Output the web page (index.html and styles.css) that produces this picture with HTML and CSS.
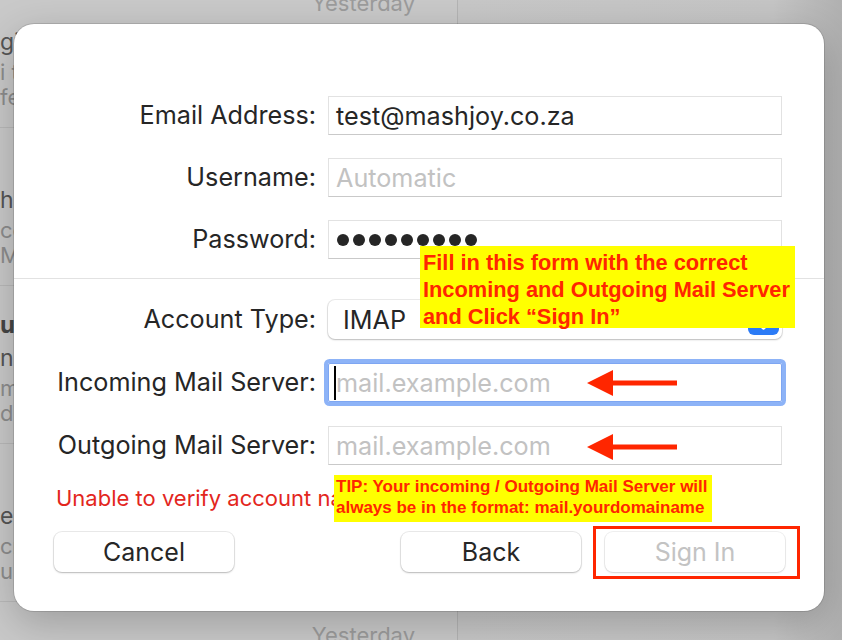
FILE: index.html
```html
<!DOCTYPE html>
<html lang="en">
<head>
    <meta charset="UTF-8">
    <meta name="viewport" content="width=device-width, initial-scale=1.0">
    <title>Add Mail Account</title>
    <link rel="stylesheet" href="styles.css">
</head>
<body>
    <div class="window">
        <aside class="list">
            <div class="list-inner">
                <div class="msg">
                    <div class="msg-head"><span class="sender"></span><span class="date">Yesterday</span></div>
                    <div class="subject">gin notification</div>
                    <div class="preview">i there, a new sign-in was</div>
                    <div class="preview">fetched from your account</div>
                </div>
                <div class="msg">
                    <div class="msg-head"><span class="sender"></span><span class="date">Yesterday</span></div>
                    <div class="subject">he account update</div>
                    <div class="preview">cc: billing team</div>
                    <div class="preview">Mail settings have changed</div>
                </div>
                <div class="msg">
                    <div class="msg-head"><span class="sender">ur hosting</span><span class="date">Yesterday</span></div>
                    <div class="subject">n] Invoice ready</div>
                    <div class="preview">mail server details below</div>
                    <div class="preview">due on receipt</div>
                </div>
                <div class="msg">
                    <div class="msg-head"><span class="sender"></span><span class="date">Yesterday</span></div>
                    <div class="subject">erc order confirmation</div>
                    <div class="preview">cr: thank you for your order</div>
                    <div class="preview">update on your request</div>
                </div>
                <div class="msg">
                    <div class="msg-head"><span class="sender"></span><span class="date">Yesterday</span></div>
                </div>
            </div>
        </aside>
        <main class="reader"></main>
    </div>

    <div class="sheet">
        <div class="fields">
            <label>Email Address:</label>
            <div class="field">test@mashjoy.co.za</div>
            <label>Username:</label>
            <div class="field"><span class="placeholder">Automatic</span></div>
            <label>Password:</label>
            <div class="field dots">
                <span></span><span></span><span></span><span></span><span></span><span></span><span></span><span></span><span></span>
            </div>
        </div>

        <div class="divider"></div>

        <div class="fields">
            <label>Account Type:</label>
            <div class="select">
                <span>IMAP</span>
                <span class="stepper">
                    <svg width="31" height="31" viewBox="0 0 31 31">
                        <path d="M10.5 11 L15.5 6.5 L20.5 11" fill="none" stroke="#fff" stroke-width="2.4" stroke-linecap="round" stroke-linejoin="round"/>
                        <path d="M10.5 20 L15.5 24.5 L20.5 20" fill="none" stroke="#fff" stroke-width="2.4" stroke-linecap="round" stroke-linejoin="round"/>
                    </svg>
                </span>
            </div>
            <label>Incoming Mail Server:</label>
            <div class="field focus"><span class="caret"></span><span class="placeholder">mail.example.com</span></div>
            <label>Outgoing Mail Server:</label>
            <div class="field"><span class="placeholder">mail.example.com</span></div>
        </div>

        <p class="error">Unable to verify account name or password.</p>

        <div class="actions">
            <button type="button">Cancel</button>
            <button type="button" class="push">Back</button>
            <button type="button" class="disabled">Sign In</button>
        </div>
    </div>

    <!-- annotations drawn over the screenshot -->
    <div class="note note-main">Fill in this form with the correct<br>Incoming and Outgoing Mail Server<br>and Click &ldquo;Sign In&rdquo;</div>
    <div class="note note-tip">TIP: Your incoming / Outgoing Mail Server will<br>always be in the format: mail.yourdomainame</div>

    <svg class="arrow arrow-in" width="90" height="26" viewBox="0 0 90 26">
        <path d="M0 13 L26 0 L26 10.5 L90 10.5 L90 15.5 L26 15.5 L26 26 Z" fill="#ff2600"/>
    </svg>
    <svg class="arrow arrow-out" width="90" height="26" viewBox="0 0 90 26">
        <path d="M0 13 L26 0 L26 10.5 L90 10.5 L90 15.5 L26 15.5 L26 26 Z" fill="#ff2600"/>
    </svg>

    <div class="highlight"></div>
</body>
</html>
```

FILE: styles.css
```css
body {
    margin: 0;
    width: 842px;
    height: 640px;
    overflow: hidden;
    position: relative;
    font-family: 'Inter', 'Noto Sans', sans-serif;
    background-color: #c8c8c8;
}

/* Mail window behind the sheet */
.window {
    display: flex;
    height: 640px;
}

.list {
    width: 457px;
    border-right: 1px solid #b4b4b4;
    background-color: #c9c9c9;
    overflow: hidden;
}

.list-inner {
    margin-top: -30px; /* list is scrolled */
}

.msg {
    padding: 24px 42px 17px 0;
    border-bottom: 1px solid #b9b9b9;
    white-space: nowrap;
}

.msg-head {
    display: flex;
    justify-content: space-between;
    align-items: flex-start;
    height: 30px;
}

.sender {
    font-size: 24px;
    line-height: 30px;
    font-weight: 700;
    color: #464646;
}

.date {
    font-size: 22px;
    line-height: 18px;
    color: #9c9c9c;
}

.subject {
    font-size: 23px;
    line-height: 36px;
    color: #555;
}

.preview {
    font-size: 22px;
    line-height: 25px;
    color: #8d8d8d;
}

.reader {
    flex: 1;
    background: linear-gradient(to right, #c7c7c7 0%, #c5c5c5 82%, #b0b0b0 100%);
}

/* Account sheet */
.sheet {
    position: absolute;
    left: 14px;
    top: 24px;
    width: 810px;
    height: 587px;
    box-sizing: border-box;
    padding-top: 72px;
    background-color: #fff;
    border-radius: 20px;
    box-shadow: 0 0 0 1px rgba(0, 0, 0, 0.12), 0 12px 40px rgba(0, 0, 0, 0.22);
    color: #262626;
}

.fields {
    display: grid;
    grid-template-columns: 302px 454px;
    column-gap: 12px;
    row-gap: 23px;
    align-items: center;
}

.divider + .fields {
    row-gap: 24px;
}

label {
    text-align: right;
    font-size: 25.2px;
    line-height: 39px;
}

.field {
    height: 39px;
    box-sizing: border-box;
    border: 1px solid #e2e2e2;
    border-bottom-color: #c9c9c9;
    padding-left: 7px;
    display: flex;
    align-items: center;
    font-size: 25.2px;
}

.placeholder {
    color: #c2c2c2;
}

.field.focus {
    padding-left: 5px;
    border-color: #7ea6f2;
    border-radius: 2px;
    box-shadow: 0 0 0 4px #8db3f7;
}

.caret {
    display: inline-block;
    width: 2px;
    height: 34px;
    background-color: #000;
}

.dots {
    gap: 4px;
    padding-left: 8px;
}

.dots span {
    width: 12px;
    height: 12px;
    border-radius: 50%;
    background-color: #262626;
}

.divider {
    height: 1px;
    background-color: #e2e2e2;
    margin: 19px 0 21px;
}

.select {
    height: 39px;
    box-sizing: border-box;
    display: flex;
    align-items: center;
    justify-content: space-between;
    padding-left: 15px;
    padding-right: 3px;
    font-size: 25.2px;
    border-radius: 7px;
    background-color: #fff;
    box-shadow: 0 0 0 1px rgba(0, 0, 0, 0.08), 0 1px 2px rgba(0, 0, 0, 0.2);
}

.stepper {
    width: 31px;
    height: 31px;
    border-radius: 6px;
    background-color: #2b7bf6;
}

.stepper svg {
    display: block;
}

.error {
    margin: 18px 0 0 42px;
    font-size: 22px;
    line-height: 30px;
    color: #e3261d;
    white-space: nowrap;
}

.actions {
    display: flex;
    gap: 24px;
    margin-top: 19px;
    padding: 0 39px 0 40px;
}

.actions button {
    width: 180px;
    height: 40px;
    border: none;
    border-radius: 8px;
    background-color: #fff;
    font-family: inherit;
    font-size: 25px;
    color: #262626;
    box-shadow: 0 0 0 1px rgba(0, 0, 0, 0.08), 0 1px 2px rgba(0, 0, 0, 0.22);
}

.actions .push {
    margin-left: auto;
}

.actions .disabled {
    color: #c3c3c3;
    box-shadow: 0 0 0 1px rgba(0, 0, 0, 0.06), 0 1px 2px rgba(0, 0, 0, 0.12);
}

/* Annotations */
.note {
    position: absolute;
    box-sizing: border-box;
    background-color: #ffff00;
    color: #ff2600;
    font-family: 'Liberation Sans', Arial, sans-serif;
    font-weight: 700;
    white-space: nowrap;
}

.note-main {
    left: 420px;
    top: 246px;
    width: 375px;
    height: 82px;
    padding: 3px 0 0 3px;
    font-size: 21.8px;
    line-height: 27px;
}

.note-tip {
    left: 334px;
    top: 475px;
    width: 378px;
    height: 47px;
    padding: 2px 0 0 2px;
    font-size: 17px;
    line-height: 20.5px;
}

.arrow {
    position: absolute;
    left: 587px;
}

.arrow-in {
    top: 370px;
}

.arrow-out {
    top: 434px;
}

.highlight {
    position: absolute;
    left: 593px;
    top: 526px;
    width: 207px;
    height: 53px;
    box-sizing: border-box;
    border: 3px solid #ff2600;
}
```
